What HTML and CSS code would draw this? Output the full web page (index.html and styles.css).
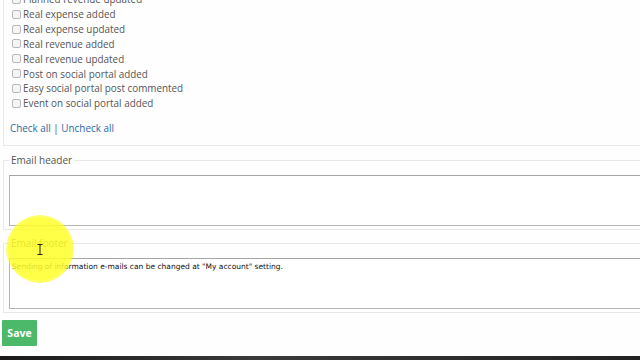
FILE: index.html
```html
<!DOCTYPE html>
<html>
<head>
<meta charset="utf-8">
<link rel="stylesheet" href="styles.css">
</head>
<body>
<div class="page">
  <fieldset class="box events">
    <ul class="checks">
      <li><span class="cb"></span>Planned revenue updated</li>
      <li><span class="cb"></span>Real expense added</li>
      <li><span class="cb"></span>Real expense updated</li>
      <li><span class="cb"></span>Real revenue added</li>
      <li><span class="cb"></span>Real revenue updated</li>
      <li><span class="cb"></span>Post on social portal added</li>
      <li><span class="cb"></span>Easy social portal post commented</li>
      <li><span class="cb"></span>Event on social portal added</li>
    </ul>
    <div class="checkall"><a href="#">Check all</a> | <a href="#">Uncheck all</a></div>
  </fieldset>

  <fieldset class="box mail header">
    <legend>Email header</legend>
    <div class="area"></div>
  </fieldset>

  <fieldset class="box mail footer">
    <legend>Email footer</legend>
    <div class="area">Sending of information e-mails can be changed at "My account" setting.</div>
  </fieldset>

  <button class="save">Save</button>
</div>
<div class="taskbar"></div>
<div class="spot"></div>
<svg class="ibeam" width="6" height="11" viewBox="0 0 6 11"><path d="M0.5 0.5h5M3 0.5v10M0.5 10.5h5" stroke="#222" stroke-width="1" fill="none"/></svg>
</body>
</html>
```
FILE: styles.css
```css
html, body {
  margin: 0;
  padding: 0;
  width: 640px;
  height: 360px;
  overflow: hidden;
  background: #fefefe;
}
body {
  position: relative;
  font-family: "Open Sans", "Noto Sans", sans-serif;
  color: #555;
}
.page {
  width: 720px;
  padding-left: 3px;
  margin-top: -25px;
}
.box {
  margin: 0;
  border: 1px solid #e8e8e8;
  padding: 0;
  min-width: 0;
}
.events {
  padding: 16px 0 9px 8px;
}
.checks {
  list-style: none;
  margin: 0;
  padding: 0;
}
.checks li {
  display: flex;
  align-items: center;
  height: 14.85px;
  font-size: 9.9px;
  color: #555;
}
.cb {
  width: 7px;
  height: 7px;
  border: 1px solid #b9b9b9;
  border-radius: 2px;
  background: #f4f4f4;
  margin-right: 2px;
}
.checkall {
  margin-top: 10px;
  margin-left: -2px;
  font-size: 9.9px;
  line-height: 15px;
  color: #555;
}
.checkall a {
  color: #2b6aa8;
  text-decoration: none;
}
.mail {
  margin-top: 7px;
  padding: 0 0 3px 6px;
}
.mail legend {
  font-size: 10px;
  line-height: 15px;
  padding: 0 2px;
  margin-left: -1px;
  color: #555;
}
.area {
  margin-left: -1px;
  border: 1px solid #b5b5b5;
  border-top-color: #a5a5a5;
  background: #fff;
  font-family: "DejaVu Sans", sans-serif;
  font-size: 7.5px;
  color: #111;
  padding: 3px 2px;
  box-sizing: border-box;
  height: 51px;
  margin-top: 7px;
}
.footer { margin-top: 6px; }
.save {
  display: block;
  margin-top: 7px;
  margin-left: -1px;
  width: 35px;
  height: 26px;
  border: 0;
  border-radius: 1px;
  background: #4cb96a;
  color: #fff;
  font-family: "Open Sans", sans-serif;
  font-weight: 700;
  font-size: 10.5px;
  padding: 0;
}
.taskbar {
  position: absolute;
  left: 0;
  right: 0;
  bottom: 0;
  height: 4px;
  background: linear-gradient(90deg, #1a1a1a, #3a3a3a 40%, #222);
}
.spot {
  position: absolute;
  left: 6px;
  top: 215px;
  width: 68px;
  height: 68px;
  border-radius: 50%;
  background: radial-gradient(circle, rgba(255,255,40,0.85) 64%, rgba(255,255,40,0.6) 70%, rgba(255,255,40,0) 72%);
}
.ibeam {
  position: absolute;
  left: 37px;
  top: 244px;
}
```
